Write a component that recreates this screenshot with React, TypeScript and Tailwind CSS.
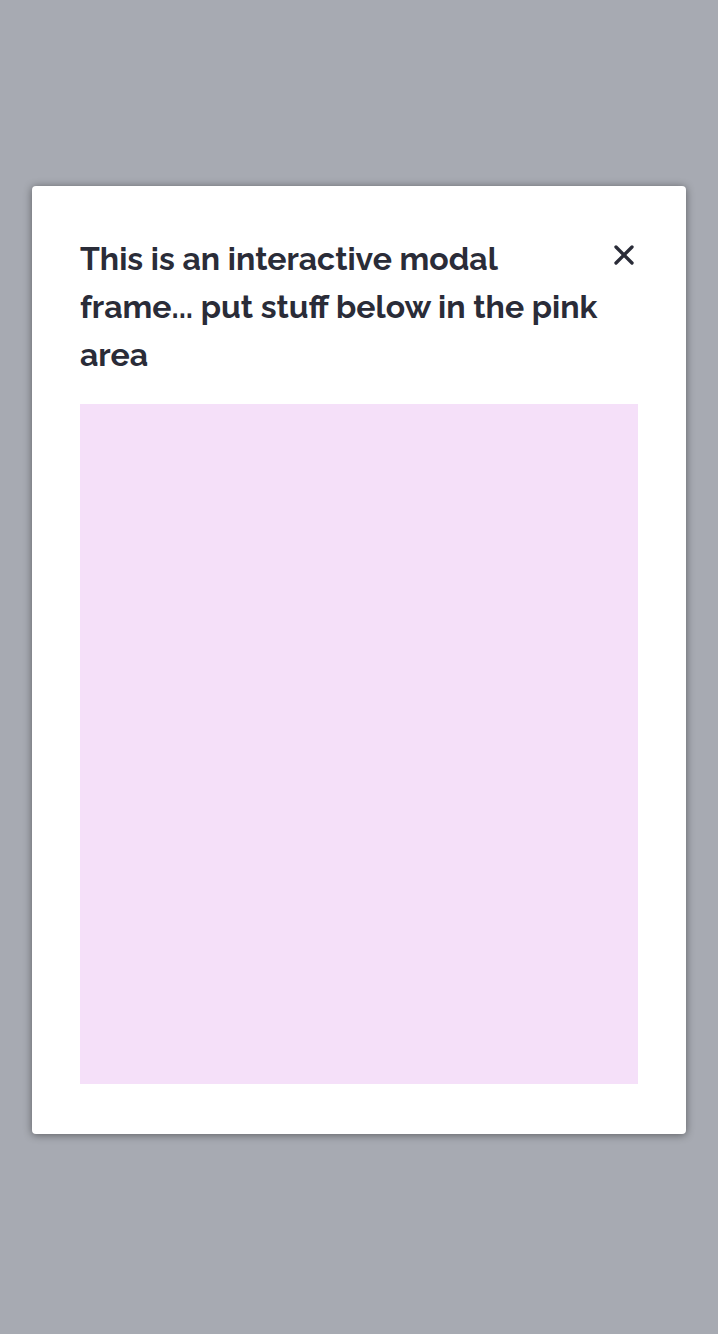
import { X } from 'lucide-react';

export default function App() {
  return (
    <div className="min-h-[1334px] bg-[#a7aab2] px-8 pt-[186px] font-['Raleway','Lato',sans-serif]">
      <div className="rounded bg-white px-12 pt-[49px] pb-[50px] shadow-[0_1px_8px_rgba(0,0,0,0.45)]">
        <div className="flex items-start justify-between">
          <h2 className="w-[526px] text-[32px] leading-[48px] font-bold text-[#2a2c38]">
            This is an interactive modal frame... put stuff below in the pink area
          </h2>
          <button className="mt-[4px] mr-[-2px] text-[#2a2c38]">
            <X className="h-8 w-8" strokeWidth={2.5} />
          </button>
        </div>
        <div className="mt-[25px] h-[680px] bg-[#f5e0f9]" />
      </div>
    </div>
  );
}
